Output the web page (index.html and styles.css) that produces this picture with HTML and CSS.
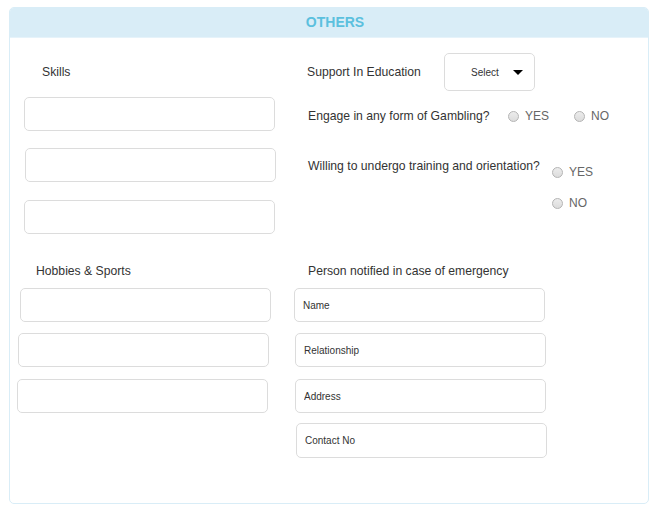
FILE: index.html
```html
<!DOCTYPE html>
<html>
<head>
<meta charset="utf-8">
<link rel="stylesheet" href="styles.css">
</head>
<body>
<div class="panel">
  <div class="panel-heading">OTHERS</div>
  <div class="panel-body">
    <div class="col col-left top">
      <div class="label skills-label">Skills</div>
      <input class="field f-a" type="text">
      <input class="field f-b gap18" type="text">
      <input class="field f-a gap19" type="text">
    </div>
    <div class="col col-right top">
      <div class="row support">
        <span class="label">Support In Education</span>
        <div class="select"><span>Select</span><i class="caret"></i></div>
      </div>
      <div class="row gamble">
        <span class="label">Engage in any form of Gambling?</span>
        <label class="radio r-yes"><i class="dot"></i>YES</label>
        <label class="radio r-no"><i class="dot"></i>NO</label>
      </div>
      <div class="row training">
        <span class="label">Willing to undergo training and orientation?</span>
        <div class="radio-stack">
          <label class="radio"><i class="dot"></i>YES</label>
          <label class="radio"><i class="dot"></i>NO</label>
        </div>
      </div>
    </div>
    <div class="col col-left bottom">
      <div class="label hobbies-label">Hobbies &amp; Sports</div>
      <input class="field h-a" type="text">
      <input class="field h-b gap12" type="text">
      <input class="field h-c gap13" type="text">
    </div>
    <div class="col col-right bottom">
      <div class="label person-label">Person notified in case of emergency</div>
      <input class="field p-a" type="text" placeholder="Name">
      <input class="field p-b gap12" type="text" placeholder="Relationship">
      <input class="field p-b gap13" type="text" placeholder="Address">
      <input class="field p-c gap11 tall" type="text" placeholder="Contact No">
    </div>
  </div>
</div>
</body>
</html>
```
FILE: styles.css
```css
* { box-sizing: border-box; }
body {
  margin: 0;
  background: #fff;
  font-family: "Liberation Sans", Arial, sans-serif;
  color: #333;
}
.panel {
  margin: 7px 0 0 9px;
  width: 640px;
  height: 497px;
  border: 1px solid #d9edf7;
  border-radius: 5px;
  overflow: hidden;
}
.panel-heading {
  height: 30px;
  background: #d9edf7;
  border-bottom: 1px solid #e6f3fa;
  color: #5bc0de;
  font-weight: bold;
  font-size: 14px;
  line-height: 29px;
  text-align: center;
  padding-left: 12px;
}
.panel-body {
  display: grid;
  grid-template-columns: 284px 1fr;
  grid-template-rows: 226px auto;
}
.col { display: flex; flex-direction: column; align-items: flex-start; }
.label { font-size: 12.2px; line-height: 14px; color: #333; }
.skills-label { margin: 27px 0 18px 32px; }
.hobbies-label { margin: 0 0 10px 26px; }
.person-label { margin: 0 0 10px 14px; }

.field {
  display: block;
  width: 251px;
  height: 34px;
  border: 1px solid #dcdcdc;
  border-radius: 5px;
  background: #fff;
  padding: 0 8px;
  font-family: "Liberation Sans", Arial, sans-serif;
  font-size: 10px;
  color: #333;
  outline: none;
}
.field::placeholder { color: #333; opacity: 1; }
.tall { height: 35px; }
.f-a { margin-left: 14px; }
.f-b { margin-left: 15px; }
.h-a { margin-left: 10px; }
.h-b { margin-left: 8px; }
.h-c { margin-left: 7px; }
.p-a { margin-left: 0; }
.p-b { margin-left: 1px; }
.p-c { margin-left: 2px; }
.gap11 { margin-top: 10px; }
.gap12 { margin-top: 11px; }
.gap13 { margin-top: 12px; }
.gap18 { margin-top: 17px; }
.gap19 { margin-top: 18px; }

.row { display: flex; align-items: center; }
.support { margin: 15px 0 0 13px; }
.support .label { width: 137px; }
.select {
  width: 91px;
  height: 38px;
  border: 1px solid #dcdcdc;
  border-radius: 5px;
  display: flex;
  align-items: center;
  padding-left: 26px;
  font-size: 10px;
  color: #333;
}
.caret {
  margin-left: 14px;
  width: 0; height: 0;
  border-left: 5px solid transparent;
  border-right: 5px solid transparent;
  border-top: 5px solid #000;
}
.gamble { margin: 18px 0 0 14px; }
.gamble .label { width: 200px; }
.radio {
  display: flex;
  align-items: center;
  font-size: 12px;
  line-height: 14px;
  color: #666;
}
.dot {
  width: 11px; height: 11px;
  border-radius: 50%;
  border: 1px solid #b4b4b4;
  background: linear-gradient(#ececec, #dcdcdc);
  margin-right: 6px;
}
.r-no { margin-left: 25px; }
.training { margin: 36px 0 0 14px; align-items: flex-start; }
.training .label { width: 244px; }
.radio-stack { display: flex; flex-direction: column; gap: 17px; margin-top: 6px; }
```
